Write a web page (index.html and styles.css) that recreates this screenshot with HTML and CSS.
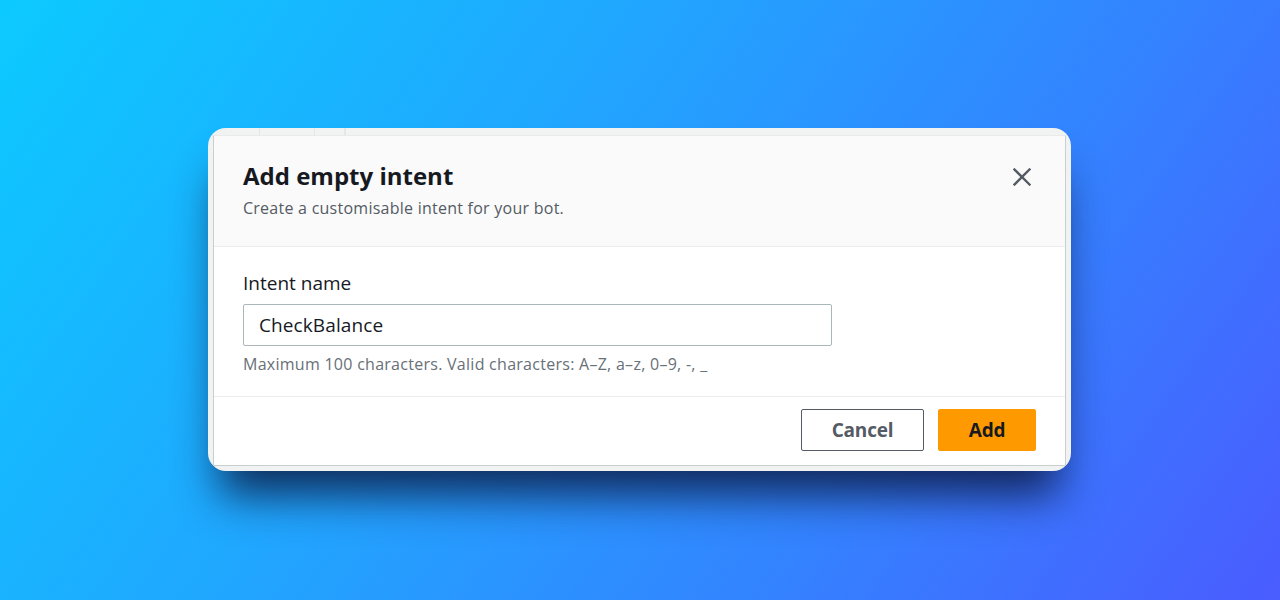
FILE: index.html
```html
<!DOCTYPE html>
<html>
<head>
<meta charset="utf-8">
<link rel="stylesheet" href="styles.css">
</head>
<body>
<div class="stage">
  <div class="frame">
    <div class="topstrip">
      <span class="tab t1"></span><span class="tab t2"></span><span class="tab t3"></span><span class="tab t4"></span>
    </div>
    <div class="modal">
      <div class="header">
        <div class="titles">
          <h1 class="title">Add empty intent</h1>
          <p class="subtitle">Create a customisable intent for your bot.</p>
        </div>
        <button class="close" aria-label="Close">
          <svg width="18" height="18" viewBox="0 0 18 18"><path d="M1.5 1.5 L16.5 16.5 M16.5 1.5 L1.5 16.5" stroke="#545b64" stroke-width="2.4" stroke-linecap="square" fill="none"/></svg>
        </button>
      </div>
      <div class="body">
        <label class="label">Intent name</label>
        <div class="input">CheckBalance</div>
        <p class="hint">Maximum 100 characters. Valid characters: A–Z, a–z, 0–9, -, _</p>
      </div>
      <div class="footer">
        <button class="btn cancel">Cancel</button>
        <button class="btn add">Add</button>
      </div>
    </div>
  </div>
</div>
</body>
</html>
```
FILE: styles.css
```css
* { box-sizing: border-box; }
html, body { margin: 0; padding: 0; }
body {
  width: 1280px;
  height: 600px;
  overflow: hidden;
  font-family: "Open Sans", "Noto Sans", sans-serif;
}
.stage {
  width: 1280px;
  height: 600px;
  background: linear-gradient(125deg, #0ccaff 0%, #22a4ff 40%, #3482ff 70%, #4a5cff 100%);
  display: flex;
  justify-content: center;
  padding-top: 128px;
}
.frame {
  width: 863px;
  height: 343px;
  margin-left: -1px;
  border-radius: 18px;
  overflow: hidden;
  background: #f1f3f3;
  padding: 7px 5px 5px 5px;
  display: flex;
  flex-direction: column;
  position: relative;
  box-shadow: 0 36px 44px -12px rgba(12, 24, 64, 0.85);
}
.topstrip {
  position: absolute;
  left: 0; top: 0; right: 0;
  height: 7px;
  display: flex;
}
.tab { display: block; height: 7px; border-right: 1px solid #e4e7e7; }
.t1 { width: 52px; }
.t2 { width: 55px; }
.t3 { width: 30px; }
.t4 { width: 0; }
.modal {
  flex: 1;
  background: #fff;
  border: 1px solid #c9cfcf;
  border-top: 1px solid #e9ebeb;
  display: flex;
  flex-direction: column;
}
.header {
  background: #fafafa;
  border-bottom: 1px solid #eaeded;
  height: 111px;
  flex: none;
  padding: 24px 34px 0 29px;
  display: flex;
  justify-content: space-between;
  align-items: flex-start;
}
.title {
  margin: 0;
  font-size: 24px;
  font-weight: 700;
  line-height: 32px;
  color: #16191f;
  letter-spacing: 0;
}
.subtitle {
  margin: 4px 0 0 0;
  font-size: 16px;
  line-height: 24px;
  color: #545b64;
  letter-spacing: 0.25px;
}
.close {
  background: none;
  border: 0;
  padding: 0;
  margin-top: 8px;
  width: 18px;
  height: 18px;
  cursor: pointer;
}
.body {
  height: 150px;
  flex: none;
  border-bottom: 1px solid #eaeded;
  padding: 23px 30px 0 29px;
  display: flex;
  flex-direction: column;
}
.label {
  font-size: 19px;
  line-height: 26px;
  color: #16191f;
  letter-spacing: 0;
}
.input {
  margin-top: 8px;
  width: 589px;
  height: 42px;
  flex: none;
  border: 1px solid #aab7b8;
  border-radius: 2px;
  padding: 0 15px;
  display: flex;
  align-items: center;
  font-size: 19px;
  color: #16191f;
  letter-spacing: 0.1px;
}
.hint {
  margin: 5px 0 0 0;
  font-size: 16px;
  line-height: 26px;
  color: #687078;
  letter-spacing: 0.27px;
}
.footer {
  flex: 1;
  display: flex;
  justify-content: flex-end;
  align-items: flex-start;
  padding: 12px 29px 0 0;
  gap: 14px;
}
.btn {
  height: 42px;
  border-radius: 2px;
  font-family: inherit;
  font-size: 19px;
  font-weight: 700;
  letter-spacing: -0.2px;
  cursor: pointer;
}
.cancel {
  width: 123px;
  background: #fff;
  border: 1px solid #545b64;
  color: #545b64;
}
.add {
  width: 98px;
  background: #ff9900;
  border: 1px solid #ff9900;
  color: #16191f;
}
```
